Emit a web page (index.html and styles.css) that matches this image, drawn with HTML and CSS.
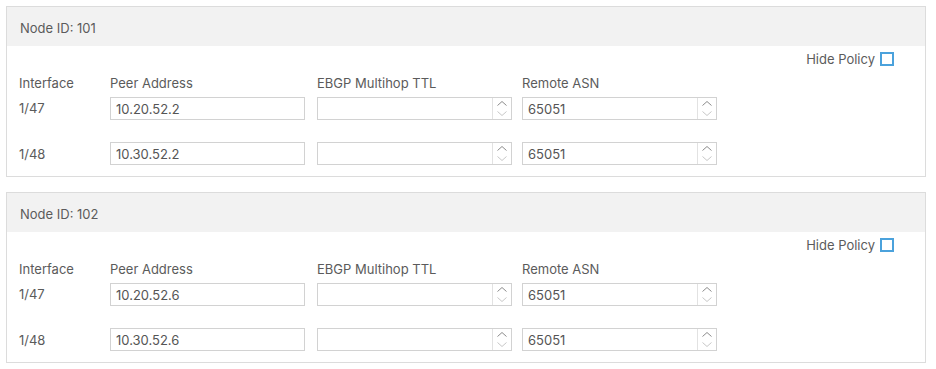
FILE: index.html
```html
<!DOCTYPE html>
<html lang="en">
<head>
  <meta charset="UTF-8" />
  <title>BGP Peer Connectivity</title>
  <link rel="stylesheet" href="styles.css">
</head>
<body>
  <!-- Node 101 -->
  <div class="node">
    <div class="node-header">Node ID: 101</div>
    <div class="node-body">
      <div class="hide-policy">Hide Policy <span class="checkbox"></span></div>
      <div class="row labels">
        <div>Interface</div>
        <div>Peer Address</div>
        <div>EBGP Multihop TTL</div>
        <div>Remote ASN</div>
      </div>
      <div class="row peer">
        <div class="iface up">1/47</div>
        <input class="field" type="text" value="10.20.52.2">
        <div class="spin-field"><input type="text" value=""><span class="spinner"><svg width="18" height="21" viewBox="0 0 18 21"><path d="M4.5 7.5 L9 3.5 L13.5 7.5" fill="none" stroke="#8c8c8c" stroke-width="1"/><path d="M4.5 13.5 L9 17.5 L13.5 13.5" fill="none" stroke="#c8c8c8" stroke-width="1"/></svg></span></div>
        <div class="spin-field"><input type="text" value="65051"><span class="spinner"><svg width="18" height="21" viewBox="0 0 18 21"><path d="M4.5 7.5 L9 3.5 L13.5 7.5" fill="none" stroke="#8c8c8c" stroke-width="1"/><path d="M4.5 13.5 L9 17.5 L13.5 13.5" fill="none" stroke="#c8c8c8" stroke-width="1"/></svg></span></div>
      </div>
      <div class="row peer">
        <div class="iface">1/48</div>
        <input class="field" type="text" value="10.30.52.2">
        <div class="spin-field"><input type="text" value=""><span class="spinner"><svg width="18" height="21" viewBox="0 0 18 21"><path d="M4.5 7.5 L9 3.5 L13.5 7.5" fill="none" stroke="#8c8c8c" stroke-width="1"/><path d="M4.5 13.5 L9 17.5 L13.5 13.5" fill="none" stroke="#c8c8c8" stroke-width="1"/></svg></span></div>
        <div class="spin-field"><input type="text" value="65051"><span class="spinner"><svg width="18" height="21" viewBox="0 0 18 21"><path d="M4.5 7.5 L9 3.5 L13.5 7.5" fill="none" stroke="#8c8c8c" stroke-width="1"/><path d="M4.5 13.5 L9 17.5 L13.5 13.5" fill="none" stroke="#c8c8c8" stroke-width="1"/></svg></span></div>
      </div>
    </div>
  </div>

  <!-- Node 102 -->
  <div class="node">
    <div class="node-header">Node ID: 102</div>
    <div class="node-body">
      <div class="hide-policy">Hide Policy <span class="checkbox"></span></div>
      <div class="row labels">
        <div>Interface</div>
        <div>Peer Address</div>
        <div>EBGP Multihop TTL</div>
        <div>Remote ASN</div>
      </div>
      <div class="row peer">
        <div class="iface up">1/47</div>
        <input class="field" type="text" value="10.20.52.6">
        <div class="spin-field"><input type="text" value=""><span class="spinner"><svg width="18" height="21" viewBox="0 0 18 21"><path d="M4.5 7.5 L9 3.5 L13.5 7.5" fill="none" stroke="#8c8c8c" stroke-width="1"/><path d="M4.5 13.5 L9 17.5 L13.5 13.5" fill="none" stroke="#c8c8c8" stroke-width="1"/></svg></span></div>
        <div class="spin-field"><input type="text" value="65051"><span class="spinner"><svg width="18" height="21" viewBox="0 0 18 21"><path d="M4.5 7.5 L9 3.5 L13.5 7.5" fill="none" stroke="#8c8c8c" stroke-width="1"/><path d="M4.5 13.5 L9 17.5 L13.5 13.5" fill="none" stroke="#c8c8c8" stroke-width="1"/></svg></span></div>
      </div>
      <div class="row peer">
        <div class="iface">1/48</div>
        <input class="field" type="text" value="10.30.52.6">
        <div class="spin-field"><input type="text" value=""><span class="spinner"><svg width="18" height="21" viewBox="0 0 18 21"><path d="M4.5 7.5 L9 3.5 L13.5 7.5" fill="none" stroke="#8c8c8c" stroke-width="1"/><path d="M4.5 13.5 L9 17.5 L13.5 13.5" fill="none" stroke="#c8c8c8" stroke-width="1"/></svg></span></div>
        <div class="spin-field"><input type="text" value="65051"><span class="spinner"><svg width="18" height="21" viewBox="0 0 18 21"><path d="M4.5 7.5 L9 3.5 L13.5 7.5" fill="none" stroke="#8c8c8c" stroke-width="1"/><path d="M4.5 13.5 L9 17.5 L13.5 13.5" fill="none" stroke="#c8c8c8" stroke-width="1"/></svg></span></div>
      </div>
    </div>
  </div>
</body>
</html>
```

FILE: styles.css
```css
/* Base */
body {
  margin: 0;
  padding: 6px 10px 0 6px;
  background: #fff;
  font-family: Inter, "Open Sans", sans-serif;
  font-size: 13px;
  color: #5b5b5b;
}

.node {
  border: 1px solid #dcdcdc;
  background: #fff;
  margin-bottom: 15px;
}

.node-header {
  height: 39px;
  line-height: 42px;
  padding-left: 13px;
  background: #f2f2f2;
}

.node-body {
  padding: 6px 0 11px 12px;
}

.hide-policy {
  display: flex;
  justify-content: flex-end;
  align-items: center;
  gap: 5px;
  height: 14px;
  padding-right: 31px;
}

.checkbox {
  width: 10px;
  height: 10px;
  border: 2px solid #4ba2dc;
  display: inline-block;
}

/* rows of the peer table */
.row {
  display: grid;
  grid-template-columns: 91px 207px 205px 195px;
  align-items: center;
}

.labels {
  line-height: 16px;
  margin-top: 9px;
}

.peer {
  height: 23px;
  margin-top: 6px;
}

.peer + .peer {
  margin-top: 22px;
}

.iface.up {
  margin-top: -2px;
}

input {
  font-family: inherit;
  font-size: 13px;
  color: #555;
  outline: none;
}

.field {
  box-sizing: border-box;
  width: 195px;
  height: 23px;
  border: 1px solid #d2d2d2;
  padding: 0 5px;
  margin: 0;
}

.spin-field {
  box-sizing: border-box;
  display: flex;
  width: 195px;
  height: 23px;
  border: 1px solid #d2d2d2;
}

.spin-field input {
  flex: 1;
  min-width: 0;
  border: none;
  padding: 0 5px;
  margin: 0;
  height: 21px;
}

.spinner {
  width: 18px;
  height: 21px;
  border-left: 1px solid #e2e2e2;
  display: flex;
}
```
